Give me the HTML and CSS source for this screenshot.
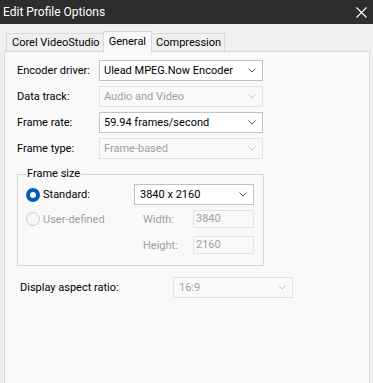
FILE: index.html
```html
<!DOCTYPE html>
<html>
<head>
<meta charset="utf-8">
<link rel="stylesheet" href="styles.css">
</head>
<body>
<div class="titlebar">
  <span class="title">Edit Profile Options</span>
  <svg class="close" width="11" height="11" viewBox="0 0 11 11"><path d="M0.5 0.5 L10.5 10.5 M10.5 0.5 L0.5 10.5" stroke="#fff" stroke-width="1.1" fill="none"/></svg>
</div>
<div class="dialog">
  <div class="tabs">
    <div class="tab">Corel VideoStudio</div>
    <div class="tab active">General</div>
    <div class="tab">Compression</div>
  </div>
  <div class="panel">
    <div class="rows">
      <div class="label">Encoder driver:</div>
      <div class="combo"><span>Ulead MPEG.Now Encoder</span><svg class="chev" width="8" height="5" viewBox="0 0 8 5"><polyline points="0.5,0.5 4,4 7.5,0.5" fill="none" stroke="#606060" stroke-width="1"/></svg></div>
      <div class="label">Data track:</div>
      <div class="combo disabled"><span>Audio and Video</span><svg class="chev" width="8" height="5" viewBox="0 0 8 5"><polyline points="0.5,0.5 4,4 7.5,0.5" fill="none" stroke="#c8c8c8" stroke-width="1"/></svg></div>
      <div class="label">Frame rate:</div>
      <div class="combo"><span>59.94 frames/second</span><svg class="chev" width="8" height="5" viewBox="0 0 8 5"><polyline points="0.5,0.5 4,4 7.5,0.5" fill="none" stroke="#606060" stroke-width="1"/></svg></div>
      <div class="label">Frame type:</div>
      <div class="combo disabled"><span>Frame-based</span><svg class="chev" width="8" height="5" viewBox="0 0 8 5"><polyline points="0.5,0.5 4,4 7.5,0.5" fill="none" stroke="#c8c8c8" stroke-width="1"/></svg></div>
    </div>
    <fieldset class="group">
      <legend>Frame size</legend>
      <div class="grow first">
        <div class="radio-label"><span class="radio on"></span><span>Standard:</span></div>
        <div class="combo small"><span>3840 x 2160</span><svg class="chev" width="8" height="5" viewBox="0 0 8 5"><polyline points="0.5,0.5 4,4 7.5,0.5" fill="none" stroke="#606060" stroke-width="1"/></svg></div>
      </div>
      <div class="grow second">
        <div class="radio-label dim"><span class="radio off"></span><span>User-defined</span></div>
        <div class="field"><span class="flabel">Width:</span><span class="input">3840</span></div>
      </div>
      <div class="grow third">
        <div class="radio-label"></div>
        <div class="field"><span class="flabel">Height:</span><span class="input">2160</span></div>
      </div>
    </fieldset>
    <div class="aspect">
      <div class="alabel">Display aspect ratio:</div>
      <div class="combo disabled small"><span>16:9</span><svg class="chev" width="8" height="5" viewBox="0 0 8 5"><polyline points="0.5,0.5 4,4 7.5,0.5" fill="none" stroke="#c8c8c8" stroke-width="1"/></svg></div>
    </div>
  </div>
</div>
</body>
</html>
```

FILE: styles.css
```css
* { box-sizing: border-box; }
body {
  margin: 0;
  width: 373px;
  height: 383px;
  overflow: hidden;
  background: #f0f0f0;
  font-family: Roboto, "Liberation Sans", sans-serif;
  font-size: 11px;
  color: #000;
}
.titlebar {
  height: 24px;
  background: #2d2d2d;
  color: #fff;
  display: flex;
  align-items: center;
  justify-content: space-between;
  padding: 0 6px 0 3px;
  font-size: 12px;
}
.close { display: block; }
.dialog { padding: 7px 3px 0 4px; }
.tabs {
  display: flex;
  align-items: flex-end;
  height: 20px;
  margin-left: 2px;
  position: relative;
  z-index: 1;
}
.tab {
  height: 18px;
  line-height: 17px;
  padding: 0 3px 0 5px;
  border: 1px solid #d9d9d9;
  border-bottom: none;
  background: #f0f0f0;
  margin-left: -1px;
  white-space: nowrap;
}
.tab:first-child { margin-left: 0; }
.tab:last-child { padding: 0 3px 0 4px; }
.tab.active {
  height: 21px;
  margin-bottom: -1px;
  line-height: 19px;
  background: #f9f9f9;
  padding: 0 5px;
}
.panel {
  background: #f9f9f9;
  border: 1px solid #d9d9d9;
  height: 340px;
  padding: 8px 0 0 12px;
}
.rows {
  display: grid;
  grid-template-columns: 82px 164px;
  grid-auto-rows: 21px;
  row-gap: 5px;
  align-items: center;
}
.label { white-space: nowrap; }
.combo {
  height: 21px;
  border: 1px solid #c2c2c2;
  background: #fff;
  display: flex;
  align-items: center;
  justify-content: space-between;
  padding: 0 6px 0 4px;
  white-space: nowrap;
}
.combo.disabled {
  background: #f9f9f9;
  border-color: #e3e3e3;
  color: #a0a0a0;
}
.combo.small { width: 120px; padding-left: 5px; }
.chev { display: block; }
.group {
  margin: 8px 0 0 0;
  width: 247px;
  border: 1px solid #d5d5d5;
  padding: 3px 0 11px 8px;
}
.group legend {
  padding: 0 1px;
  line-height: 14px;
}
.grow { display: flex; align-items: center; }
.grow.second { margin-top: 5px; }
.grow.third { margin-top: 8px; }
.radio-label {
  width: 108px;
  display: flex;
  align-items: center;
  gap: 3px;
  align-self: flex-start;
  height: 18px;
}
.grow.first .radio-label { align-self: center; }
.radio-label.dim { color: #a0a0a0; }
.radio {
  width: 14px;
  height: 14px;
  border-radius: 50%;
  flex: none;
}
.radio.on {
  background: #005fb8;
  display: flex;
  align-items: center;
  justify-content: center;
}
.radio.on::after {
  content: "";
  width: 6px;
  height: 6px;
  border-radius: 50%;
  background: #fff;
}
.radio.off {
  border: 1px solid #cdcdcd;
  background: #f6f6f6;
}
.field {
  display: flex;
  align-items: center;
  padding-left: 9px;
}
.flabel { width: 50px; color: #a0a0a0; }
.input {
  width: 61px;
  height: 18px;
  border: 1px solid #e3e3e3;
  background: #f9f9f9;
  color: #a0a0a0;
  padding-left: 2px;
  line-height: 16px;
}
.aspect {
  display: flex;
  align-items: center;
  margin-top: 11px;
  padding-left: 3px;
}
.alabel { width: 153px; }
```
